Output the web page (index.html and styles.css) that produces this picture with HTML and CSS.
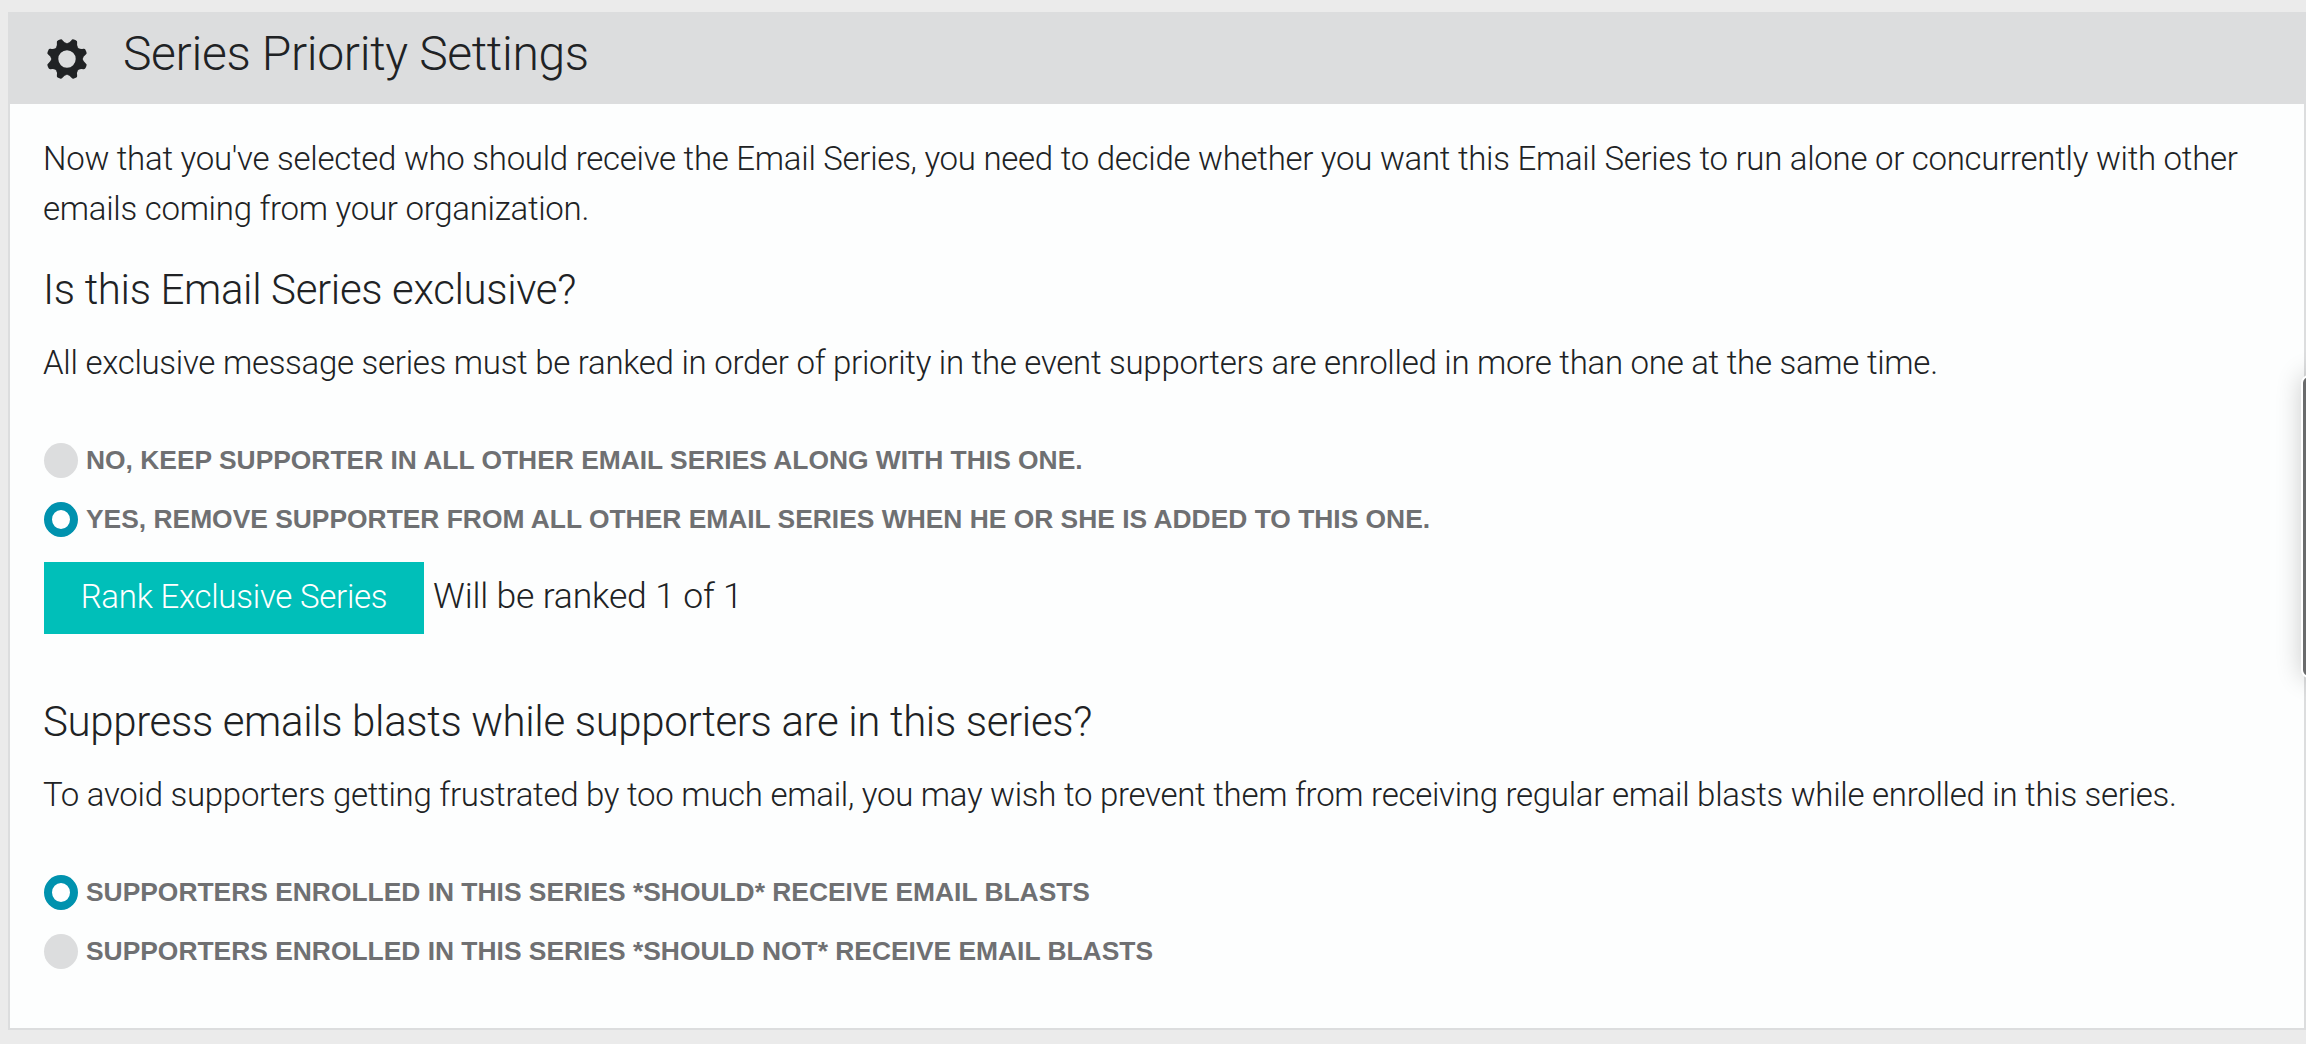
FILE: index.html
```html
<!DOCTYPE html>
<html lang="en">
<head>
  <meta charset="utf-8">
  <title>Series Priority Settings</title>
  <link rel="stylesheet" href="styles.css">
</head>
<body>

    <div class="panel">
        <div class="panel-header">
            <svg class="gear" viewBox="-21 -21 42 42" width="42" height="42">
                <circle r="12.2" fill="none" stroke="#202224" stroke-width="7"/>
                <path id="tooth" d="M-6.1 -14.4 Q-3.6 -16.2 -3.2 -18.8 Q-2.8 -20.8 -1 -20.6 L1 -20.6 Q2.8 -20.8 3.2 -18.8 Q3.6 -16.2 6.1 -14.4 Z" transform="rotate(22.5)"/>
                <use href="#tooth" transform="rotate(45)"/>
                <use href="#tooth" transform="rotate(90)"/>
                <use href="#tooth" transform="rotate(135)"/>
                <use href="#tooth" transform="rotate(180)"/>
                <use href="#tooth" transform="rotate(225)"/>
                <use href="#tooth" transform="rotate(270)"/>
                <use href="#tooth" transform="rotate(315)"/>
            </svg>
            <h1>Series Priority Settings</h1>
        </div>
        <div class="panel-body">
            <p>Now that you've selected who should receive the Email Series, you need to decide whether you want this Email Series to run alone or concurrently with other emails coming from your organization.</p>

            <h2>Is this Email Series exclusive?</h2>
            <p>All exclusive message series must be ranked in order of priority in the event supporters are enrolled in more than one at the same time.</p>
            <div class="options">
                <label><input type="radio" name="exclusive"/><span>No, keep supporter in all other email series along with this one.</span></label>
                <label><input type="radio" name="exclusive" checked/><span>Yes, remove supporter from all other email series when he or she is added to this one.</span></label>
            </div>
            <div class="rank">
                <button>Rank Exclusive Series</button>
                <span class="rank-text">Will be ranked 1 of 1</span>
            </div>

            <h2>Suppress emails blasts while supporters are in this series?</h2>
            <p>To avoid supporters getting frustrated by too much email, you may wish to prevent them from receiving regular email blasts while enrolled in this series.</p>
            <div class="options">
                <label><input type="radio" name="suppress" checked/><span>Supporters enrolled in this series *should* receive email blasts</span></label>
                <label><input type="radio" name="suppress"/><span>Supporters enrolled in this series *should not* receive email blasts</span></label>
            </div>
        </div>
    </div>
    <div class="side-tab"></div>

</body>
</html>
```
FILE: styles.css
```css
* {
    box-sizing: border-box;
}
body {
    margin: 0;
    height: 1044px;
    padding: 12px 0 14px 8px;
    overflow: hidden;
    background: #ebebeb;
    color: #202224;
    font-family: Roboto, sans-serif;
    font-weight: 300;
    font-size: 33px;
    line-height: 50px;
    letter-spacing: -.276px;
}
.panel {
    height: 1018px;
    border: 2px solid #dcddde;
    background: #fdfefe;
}
.panel-header {
    display: flex;
    height: 90px;
    padding-left: 36px;
    background: #dcddde;
}
.gear {
    margin-top: 24px;
    fill: #202224;
}
h1, h2, p {
    margin: 0;
    font-weight: 300;
}
h1 {
    margin: 10px 0 0 35px;
    font-size: 48px;
    line-height: 60px;
    letter-spacing: -.33px;
}
.panel-body {
    padding: 30px 34px 0;
}
.panel-body h2, .panel-body p {
    margin-left: -1px;
}
h2 {
    margin-top: 31px;
    font-size: 42px;
    line-height: 50px;
    letter-spacing: -.35px;
}
h2 + p {
    margin-top: 23px;
}
.options {
    margin-top: 43px;
}
label {
    display: flex;
    align-items: center;
    height: 59px;
    color: #6f7072;
    font: bold 26.4px "Liberation Sans", Arial, sans-serif;
    letter-spacing: 0;
    text-transform: uppercase;
}
input {
    appearance: none;
    width: 34px;
    height: 35px;
    margin: 0 8px 0 0;
    border-radius: 50%;
    background: #dcddde;
}
input:checked {
    border: 8px solid #0092ae;
    background: #fff;
}
.rank {
    display: flex;
    margin-top: 13px;
    margin-bottom: 63px;
}
button {
    width: 380px;
    height: 72px;
    padding: 0 0 3px;
    border: 0;
    background: #00bfb9;
    color: #fff;
    font: 300 33px Roboto, sans-serif;
    letter-spacing: -.25px;
}
.rank-text {
    margin: 9px 0 0 9px;
    font-size: 35.5px;
    letter-spacing: -.17px;
}
/* feedback tab peeking in from the right edge */
.side-tab {
    position: absolute;
    top: 375px;
    right: -41px;
    width: 46px;
    height: 303px;
    border: 2px solid #fff;
    border-radius: 8px;
    background: #6a6b6c;
    box-shadow: 0 0 26px rgba(0, 0, 0, .2);
}
```
